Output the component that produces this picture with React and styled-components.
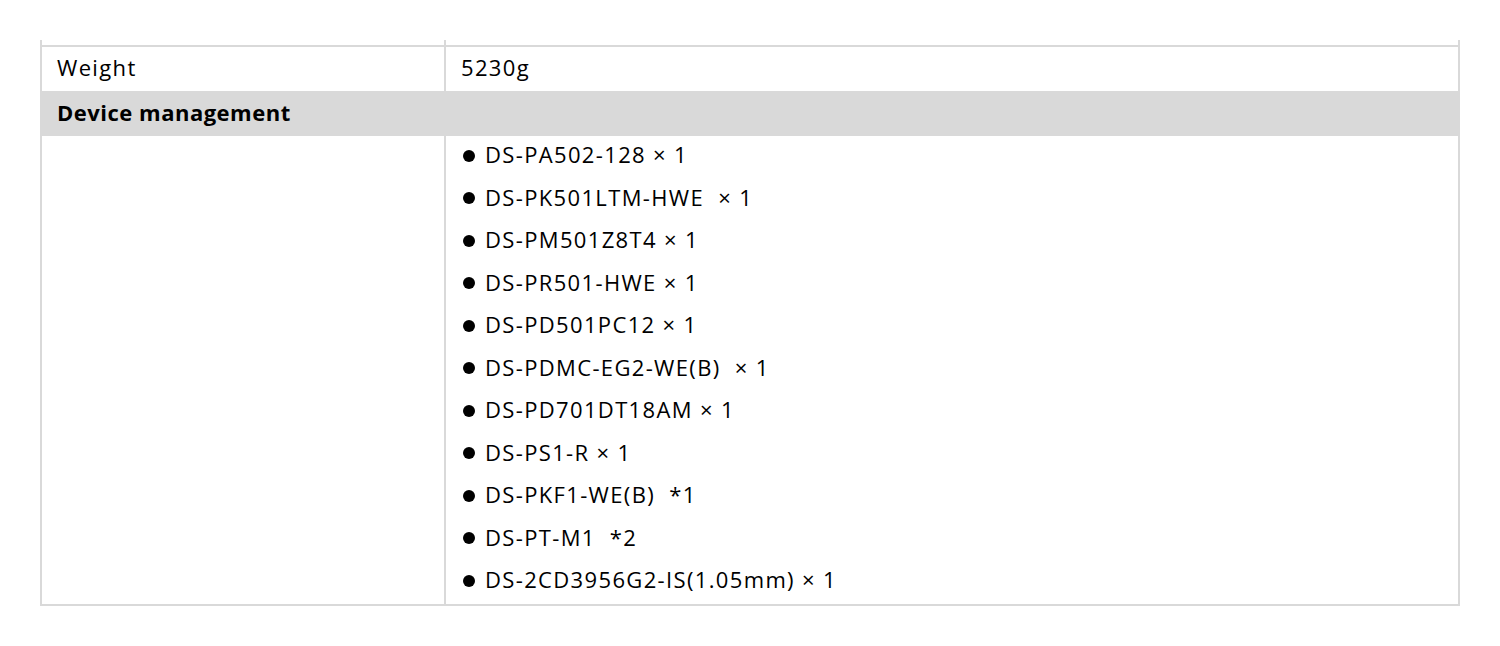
import styled, { createGlobalStyle } from "styled-components";

const GlobalStyle = createGlobalStyle`
  html, body {
    margin: 0;
    padding: 0;
    background: #ffffff;
  }
  body {
    font-family: "Open Sans", "Lato", sans-serif;
    color: #000;
  }
`;

const devices = [
  "DS-PA502-128 × 1",
  "DS-PK501LTM-HWE  × 1",
  "DS-PM501Z8T4 × 1",
  "DS-PR501-HWE × 1",
  "DS-PD501PC12 × 1",
  "DS-PDMC-EG2-WE(B)  × 1",
  "DS-PD701DT18AM × 1",
  "DS-PS1-R × 1",
  "DS-PKF1-WE(B)  *1",
  "DS-PT-M1  *2",
  "DS-2CD3956G2-IS(1.05mm) × 1",
];

export default function App() {
  return (
    <>
      <GlobalStyle />
      <Page>
        <Table>
          <Row>
            <Cell $cut />
            <Cell $cut $last />
          </Row>
          <Row>
            <Cell>Weight</Cell>
            <Cell $last>5230g</Cell>
          </Row>
          <SectionRow>Device management</SectionRow>
          <Row>
            <Cell $bottom />
            <ListCell>
              {devices.map((d) => (
                <Item key={d}>
                  <Bullet />
                  <span>{d}</span>
                </Item>
              ))}
            </ListCell>
          </Row>
        </Table>
      </Page>
    </>
  );
}

// ─── Styled Components ───────────────────────────────────────

const Page = styled.div`
  padding: 40px 40px 0 40px;
  width: 1500px;
  box-sizing: border-box;
`;

const Table = styled.div`
  width: 1420px;
  border-left: 2px solid #d9d9d9;
  border-right: 2px solid #d9d9d9;
  box-sizing: border-box;
`;

const Row = styled.div`
  display: grid;
  grid-template-columns: 404px 1fr;
`;

const Cell = styled.div`
  box-sizing: border-box;
  height: ${(p) => (p.$cut ? "7px" : "44px")};
  border-right: ${(p) => (p.$last ? "none" : "2px solid #d9d9d9")};
  border-bottom: ${(p) => (p.$cut ? "2px solid #d9d9d9" : "none")};
  padding: 0 15px 4px;
  display: flex;
  align-items: center;
  font-size: 22px;
  letter-spacing: 1.35px;
  ${(p) => p.$cut && "padding: 0;"}
  ${(p) => p.$bottom && "height: auto; border-bottom: 2px solid #d9d9d9;"}
`;

const SectionRow = styled.div`
  background: #d9d9d9;
  height: 45px;
  box-sizing: border-box;
  padding: 0 15px 3px;
  display: flex;
  align-items: center;
  font-size: 22px;
  font-weight: 700;
  letter-spacing: 0.5px;
`;

const ListCell = styled.div`
  border-bottom: 2px solid #d9d9d9;
  padding: 0 0 0 17px;
  display: flex;
  flex-direction: column;
`;

const Item = styled.div`
  height: 42.5px;
  box-sizing: border-box;
  padding-bottom: 6px;
  display: flex;
  align-items: center;
  gap: 10px;
  font-size: 22px;
  letter-spacing: 1.35px;
  white-space: pre;
`;

const Bullet = styled.span`
  width: 12px;
  height: 12px;
  margin-top: 3px;
  border-radius: 50%;
  background: #000;
  flex: none;
`;
